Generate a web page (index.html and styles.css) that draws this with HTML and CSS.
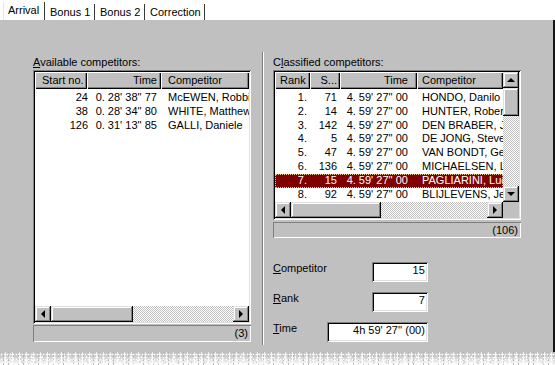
FILE: index.html
```html
<!DOCTYPE html>
<html>
<head>
<meta charset="utf-8">
<link rel="stylesheet" href="styles.css">
</head>
<body>
<div class="screen">
  <div class="tabs">
    <div class="tab tab-arrival active">Arrival</div>
    <div class="tab tab-bonus">Bonus 1</div>
    <div class="tab tab-bonus">Bonus 2</div>
    <div class="tab tab-corr">Correction</div>
  </div>
  <div class="panel">
    <section class="col col-left">
      <div class="caption"><u>A</u>vailable competitors:</div>
      <div class="listbox listbox-left">
        <div class="lv-area">
          <div class="lv-view">
            <div class="lv-head">
              <div class="hc la">Start no.</div>
              <div class="hc lb">Time</div>
              <div class="hc lc">Competitor</div>
            </div>
            <div class="lv-rows">
              <div class="row"><span class="c la">24</span><span class="c lb">0. 28' 38'' 77</span><span class="c lc">McEWEN, Robbie</span></div>
              <div class="row"><span class="c la">38</span><span class="c lb">0. 28' 34'' 80</span><span class="c lc">WHITE, Matthew</span></div>
              <div class="row"><span class="c la">126</span><span class="c lb">0. 31' 13'' 85</span><span class="c lc">GALLI, Daniele</span></div>
            </div>
          </div>
        </div>
        <div class="hbar-row">
          <div class="hbar">
            <div class="sbtn"><i class="arr arr-left"></i></div>
            <div class="thumb thumb-h-left"></div>
            <div class="track"></div>
            <div class="sbtn"><i class="arr arr-right"></i></div>
          </div>
        </div>
      </div>
      <div class="status">(3)</div>
    </section>

    <div class="sep"></div>

    <section class="col col-right">
      <div class="caption">C<u>l</u>assified competitors:</div>
      <div class="listbox listbox-right">
        <div class="lv-area">
          <div class="lv-view">
            <div class="lv-head">
              <div class="hc ra">Rank</div>
              <div class="hc rb">S...</div>
              <div class="hc rc">Time</div>
              <div class="hc rd">Competitor</div>
            </div>
            <div class="lv-rows">
              <div class="row"><span class="c ra">1.</span><span class="c rb">71</span><span class="c rc">4. 59' 27'' 00</span><span class="c rd">HONDO, Danilo</span></div>
              <div class="row"><span class="c ra">2.</span><span class="c rb">14</span><span class="c rc">4. 59' 27'' 00</span><span class="c rd">HUNTER, Robert</span></div>
              <div class="row"><span class="c ra">3.</span><span class="c rb">142</span><span class="c rc">4. 59' 27'' 00</span><span class="c rd">DEN BRABER, Jans</span></div>
              <div class="row"><span class="c ra">4.</span><span class="c rb">5</span><span class="c rc">4. 59' 27'' 00</span><span class="c rd">DE JONG, Steven</span></div>
              <div class="row"><span class="c ra">5.</span><span class="c rb">47</span><span class="c rc">4. 59' 27'' 00</span><span class="c rd">VAN BONDT, Geert</span></div>
              <div class="row"><span class="c ra">6.</span><span class="c rb">136</span><span class="c rc">4. 59' 27'' 00</span><span class="c rd">MICHAELSEN, Lars</span></div>
              <div class="row selected"><span class="c ra">7.</span><span class="c rb">15</span><span class="c rc">4. 59' 27'' 00</span><span class="c rd">PAGLIARINI, Luca</span></div>
              <div class="row"><span class="c ra">8.</span><span class="c rb">92</span><span class="c rc">4. 59' 27'' 00</span><span class="c rd">BLIJLEVENS, Jeroen</span></div>
            </div>
          </div>
          <div class="vbar">
            <div class="sbtn"><i class="arr arr-up"></i></div>
            <div class="thumb thumb-v"></div>
            <div class="track"></div>
            <div class="sbtn"><i class="arr arr-down"></i></div>
          </div>
        </div>
        <div class="hbar-row">
          <div class="hbar">
            <div class="sbtn"><i class="arr arr-left"></i></div>
            <div class="thumb thumb-h-right"></div>
            <div class="track"></div>
            <div class="sbtn"><i class="arr arr-right"></i></div>
          </div>
          <div class="corner"></div>
        </div>
      </div>
      <div class="status">(106)</div>

      <div class="form">
        <div class="flabel"><u>C</u>ompetitor</div>
        <div class="field field-short">15</div>
        <div class="flabel"><u>R</u>ank</div>
        <div class="field field-short">7</div>
        <div class="flabel"><u>T</u>ime</div>
        <div class="field field-long">4h 59' 27'' (00)</div>
      </div>
    </section>
  </div>
  <div class="torn"></div>
</div>
</body>
</html>
```

FILE: styles.css
```css
* { box-sizing: border-box; }

body {
  margin: 0;
  background: #fff;
  font-family: "Liberation Sans", Arial, sans-serif;
  font-size: 11px;
  color: #000;
}

.screen {
  width: 555px;
  height: 365px;
  overflow: hidden;
  background: #fff;
}

/* ---------- tabs ---------- */
.tabs {
  display: flex;
  align-items: flex-end;
  height: 20px;
  padding-left: 3px;
}

.tab {
  height: 16px;
  line-height: 17px;
  padding-left: 5px;
  background: #fff;
  border-right: 1px solid #3a3a3a;
  white-space: nowrap;
}

.tab.active {
  height: 18px;
  line-height: 16px;
  padding-left: 4px;
  border-left: 1px solid #e6e6e6;
}

.tab-arrival { width: 42px; }
.tab-bonus { width: 50px; }
.tab-corr { width: 60px; }

/* ---------- panel ---------- */
.panel {
  display: flex;
  align-items: flex-start;
  height: 332px;
  background: #c0c0c0;
  border-right: 2px solid #151515;
  padding-left: 33px;
}

.col {
  display: flex;
  flex-direction: column;
  margin-top: 36px;
}

.col-left { width: 218px; }
.col-right { width: 248px; margin-left: 9px; }

.sep {
  width: 2px;
  height: 293px;
  margin-top: 32px;
  margin-left: 11px;
  border-left: 1px solid #808080;
  border-right: 1px solid #fff;
}

.caption {
  height: 13px;
  line-height: 13px;
  white-space: nowrap;
}

/* ---------- list boxes ---------- */
.listbox {
  margin-top: 1px;
  padding: 2px;
  background: #fff;
  display: flex;
  flex-direction: column;
  box-shadow: inset 1px 1px #808080, inset -1px -1px #fff, inset 2px 2px #000, inset -2px -2px #dfdfdf;
}

.listbox-left { height: 254px; }
.listbox-right { height: 150px; }

.lv-area {
  flex: 1;
  display: flex;
  min-height: 0;
}

.lv-view {
  flex: 1;
  min-width: 0;
  overflow: hidden;
}

.lv-head {
  display: flex;
  height: 17px;
}

.hc {
  flex: none;
  height: 17px;
  line-height: 16px;
  background: #c0c0c0;
  white-space: nowrap;
  overflow: hidden;
  box-shadow: inset 1px 1px #fff, inset -1px -1px #000, inset -2px -2px #808080;
}

.lv-rows { padding-top: 2px; }

.row {
  display: flex;
  height: 13.8px;
  line-height: 13.8px;
  white-space: nowrap;
}

.c {
  flex: none;
  overflow: hidden;
  white-space: nowrap;
}

.row.selected {
  background: #800000;
  color: #fff;
  outline: 1px dotted #e8c89a;
  outline-offset: -1px;
}

/* left list columns */
.hc.la { width: 52px; padding-left: 7px; }
.hc.lb { width: 74px; text-align: right; padding-right: 4px; }
.hc.lc { flex: 1; padding-left: 7px; }

.c.la { width: 53px; text-align: right; }
.c.lb { width: 73px; text-align: right; padding-right: 4px; }
.c.lc { flex: 1; padding-left: 7px; }

/* right list columns */
.hc.ra { width: 35px; padding-left: 5px; }
.hc.rb { width: 30px; text-align: right; padding-right: 3px; }
.hc.rc { width: 77px; text-align: right; padding-right: 9px; }
.hc.rd { flex: 1; padding-left: 5px; }

.c.ra { width: 35px; text-align: right; padding-right: 3px; }
.c.rb { width: 30px; text-align: right; padding-right: 3px; }
.c.rc { width: 77px; text-align: right; padding-right: 9px; }
.c.rd { flex: 1; padding-left: 5px; }

/* ---------- scrollbars ---------- */
.hbar-row {
  display: flex;
  height: 16px;
  flex: none;
}

.hbar {
  flex: 1;
  display: flex;
}

.vbar {
  width: 16px;
  display: flex;
  flex-direction: column;
  flex: none;
}

.corner {
  width: 16px;
  background: #c0c0c0;
}

.sbtn, .thumb {
  flex: none;
  width: 16px;
  height: 16px;
  background: #c0c0c0;
  display: flex;
  align-items: center;
  justify-content: center;
  box-shadow: inset -1px -1px #000, inset 1px 1px #dfdfdf, inset -2px -2px #808080, inset 2px 2px #fff;
}

.thumb-h-left { width: 82px; }
.thumb-h-right { width: 90px; }
.thumb-v { height: 28px; }

.track {
  flex: 1;
  background-color: #fff;
  background-image: repeating-conic-gradient(#c0c0c0 0% 25%, #fff 0% 50%);
  background-size: 2px 2px;
}

.arr {
  display: block;
  width: 0;
  height: 0;
  border-style: solid;
  border-color: transparent;
}

.arr-up { border-width: 0 4px 4px 4px; border-bottom-color: #000; margin-top: -1px; }
.arr-down { border-width: 4px 4px 0 4px; border-top-color: #000; }
.arr-left { border-width: 4px 4px 4px 0; border-right-color: #000; margin-left: -1px; }
.arr-right { border-width: 4px 0 4px 4px; border-left-color: #000; }

/* ---------- status bars ---------- */
.status {
  height: 17px;
  margin-top: 1px;
  line-height: 16px;
  text-align: right;
  padding-right: 3px;
  box-shadow: inset 1px 1px #808080, inset -1px -1px #fff;
}

.col-right .status {
  height: 16px;
  margin-top: 2px;
}

/* ---------- form ---------- */
.form {
  width: 154px;
  margin-top: 24px;
  display: grid;
  grid-template-columns: auto 1fr;
  grid-auto-rows: 20px;
  row-gap: 10px;
}

.flabel {
  line-height: 13px;
  white-space: nowrap;
}

.field {
  justify-self: end;
  height: 20px;
  padding: 2px 3px 0 0;
  line-height: 13px;
  text-align: right;
  background: #fff;
  box-shadow: inset 1px 1px #808080, inset -1px -1px #fff, inset 2px 2px #000, inset -2px -2px #dfdfdf;
  white-space: nowrap;
}

.field-short { width: 56px; }
.field-long { width: 101px; }

/* ---------- torn bottom edge ---------- */
.torn {
  height: 13px;
  background:
    radial-gradient(circle, #fff 0.7px, transparent 1.1px) 0 0 / 3px 5px,
    radial-gradient(circle, #fff 0.9px, transparent 1.3px) 2px 1px / 7px 3px,
    radial-gradient(circle, #b4b4b4 0.6px, transparent 1px) 1px 2px / 5px 4px,
    radial-gradient(circle, #fff 0.8px, transparent 1.2px) 4px 2px / 11px 6px,
    radial-gradient(circle, #c8c8c8 0.7px, transparent 1.1px) 3px 0 / 13px 7px,
    linear-gradient(#c0c0c0 0, #c8c8c8 25%, #dadada 55%, #f6f6f6 85%, #fff 100%);
}
```
